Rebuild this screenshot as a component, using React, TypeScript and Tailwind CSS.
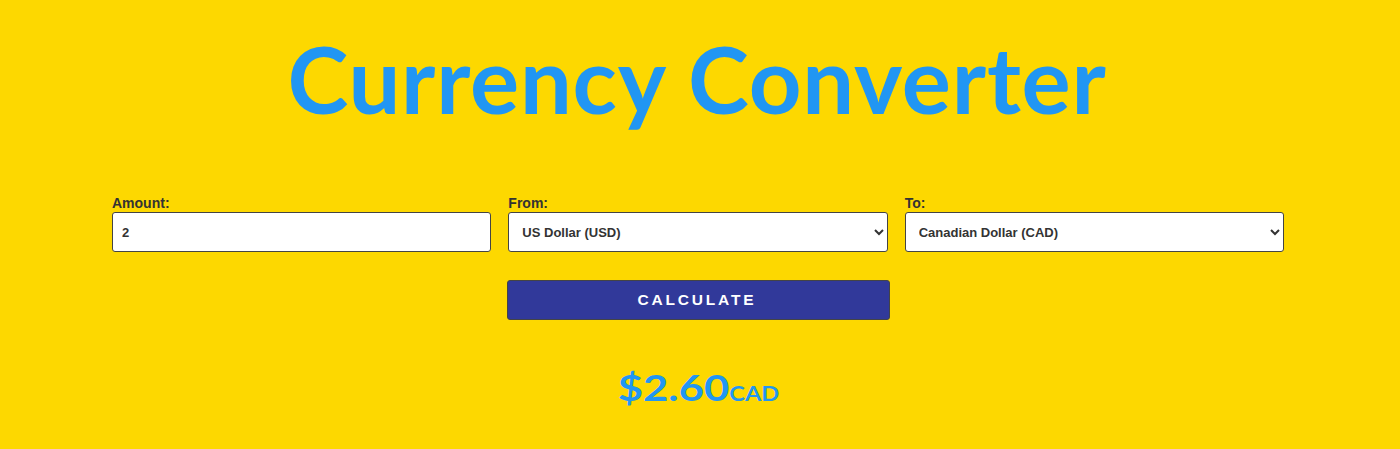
import React from "react";

export default function App() {
  return (
    <div className="w-[1400px] h-[449px] bg-[#FDD800] overflow-hidden" style={{ fontFamily: "'Liberation Sans', Arial, sans-serif" }}>
      <h1 className="text-center text-[#2196F3] font-bold text-[92px] leading-[110px] pt-[24px] tracking-[0.8px] pr-[6px]" style={{ fontFamily: "Lato, sans-serif" }}>
        Currency Converter
      </h1>
      <div className="grid grid-cols-3 gap-x-[17px] pl-[112px] pr-[116px] mt-[61px]">
        <div className="flex flex-col">
          <label className="text-[14px] font-bold text-[#333] leading-[16px] mb-[1px]">Amount:</label>
          <input defaultValue="2" className="h-[40px] bg-white border border-[#444] rounded-[3px] px-[9px] text-[13px] font-bold text-[#333] outline-none" />
        </div>
        <div className="flex flex-col">
          <label className="text-[14px] font-bold text-[#333] leading-[16px] mb-[1px]">From:</label>
          <select defaultValue="USD" className="h-[40px] bg-white border border-[#444] rounded-[3px] px-[9px] text-[13px] font-bold text-[#333] outline-none">
            <option value="USD">US Dollar (USD)</option>
            <option value="CAD">Canadian Dollar (CAD)</option>
          </select>
        </div>
        <div className="flex flex-col">
          <label className="text-[14px] font-bold text-[#333] leading-[16px] mb-[1px]">To:</label>
          <select defaultValue="CAD" className="h-[40px] bg-white border border-[#444] rounded-[3px] px-[9px] text-[13px] font-bold text-[#333] outline-none">
            <option value="USD">US Dollar (USD)</option>
            <option value="CAD">Canadian Dollar (CAD)</option>
          </select>
        </div>
        <div className="col-start-2 flex flex-col items-center mt-[28px]">
          <button className="w-[383px] h-[40px] bg-[#31399A] border border-[#444] rounded-[3px] text-white font-bold text-[15.5px] tracking-[2.8px] pr-[2px]">
            CALCULATE
          </button>
          <div className="flex justify-center items-baseline mt-[45px] text-[#2196F3] font-bold scale-x-[1.18]" style={{ fontFamily: "Lato, sans-serif" }}>
            <span className="text-[37px] leading-[44px]">$2.60</span>
            <span className="text-[20px]">CAD</span>
          </div>
        </div>
      </div>
    </div>
  );
}
